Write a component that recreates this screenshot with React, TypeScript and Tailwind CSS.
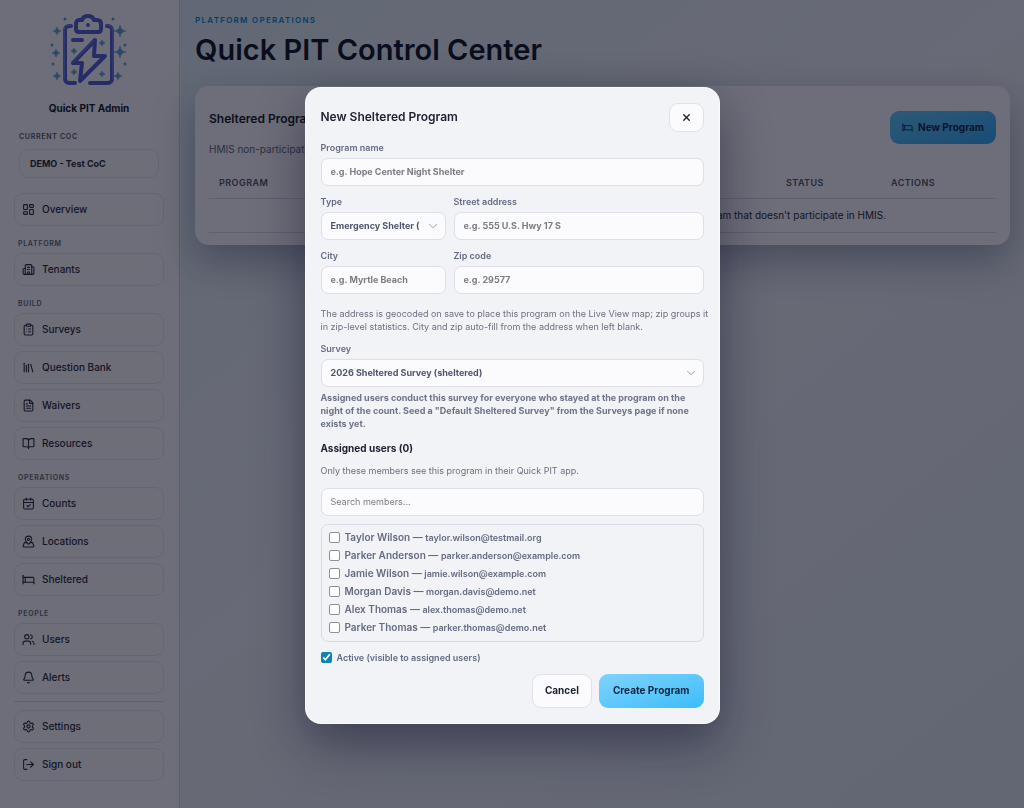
import { useState } from "react";
import type { ReactNode } from "react";
import {
  Bed,
  Bell,
  BookOpen,
  Building2,
  CalendarCheck,
  ChevronDown,
  ClipboardList,
  FileText,
  LayoutDashboard,
  Library,
  LogOut,
  MapPinned,
  Settings,
  Users,
  X,
} from "lucide-react";
import type { LucideIcon } from "lucide-react";
import { clsx } from "clsx";

interface NavItem {
  label: string;
  icon: LucideIcon;
}

interface NavGroup {
  title?: string;
  items: NavItem[];
}

interface Member {
  name: string;
  email: string;
}

const navGroups: NavGroup[] = [
  { items: [{ label: "Overview", icon: LayoutDashboard }] },
  { title: "Platform", items: [{ label: "Tenants", icon: Building2 }] },
  {
    title: "Build",
    items: [
      { label: "Surveys", icon: ClipboardList },
      { label: "Question Bank", icon: Library },
      { label: "Waivers", icon: FileText },
      { label: "Resources", icon: BookOpen },
    ],
  },
  {
    title: "Operations",
    items: [
      { label: "Counts", icon: CalendarCheck },
      { label: "Locations", icon: MapPinned },
      { label: "Sheltered", icon: Bed },
    ],
  },
  {
    title: "People",
    items: [
      { label: "Users", icon: Users },
      { label: "Alerts", icon: Bell },
    ],
  },
];

const members: Member[] = [
  { name: "Taylor Wilson", email: "taylor.wilson@testmail.org" },
  { name: "Parker Anderson", email: "parker.anderson@example.com" },
  { name: "Jamie Wilson", email: "jamie.wilson@example.com" },
  { name: "Morgan Davis", email: "morgan.davis@demo.net" },
  { name: "Alex Thomas", email: "alex.thomas@demo.net" },
  { name: "Parker Thomas", email: "parker.thomas@demo.net" },
];

// [x, y, radius] of the sparkles around the clipboard
const sparkles = [
  [7, 17, 4],
  [6, 39, 4],
  [7, 62, 4],
  [70, 17, 6],
  [70, 38, 6],
  [68, 62, 4],
  [24, 37, 3],
  [52, 29, 3],
  [24, 58, 3],
  [52, 60, 3],
];

const dots = [
  [15, 5],
  [63, 5],
  [2, 31],
  [75, 31],
  [3, 50],
  [75, 50],
];

function Logo() {
  return (
    <svg width="78" height="74" viewBox="0 0 78 74" fill="none" aria-hidden="true">
      <g stroke="#4a5ace" strokeWidth="4" strokeLinecap="round" strokeLinejoin="round">
        <path d="M21 12h-2a4 4 0 0 0-4 4v49a4 4 0 0 0 4 4h6" />
        <path d="M57 12h1a4 4 0 0 1 4 4v49a4 4 0 0 1-4 4H40" />
        <path d="M29 6h3c1-3 3-4 6-4s5 1 6 4h3c3 0 4 2 4 4v5c0 2-1 3-3 3H29c-2 0-3-1-3-3v-5c0-2 1-4 3-4Z" />
        <path d="M23 26h9" />
        <path d="M45 26 23 49h9l-2 18 25-25H44Z" />
      </g>
      <g stroke="#8f9ff0" strokeWidth="1" strokeLinecap="round" strokeLinejoin="round" opacity="0.7">
        <path d="M21 11h-2a5 5 0 0 0-5 5v49" />
        <path d="M57 11h1a5 5 0 0 1 5 5v49" />
        <path d="M44 26 23 48" />
      </g>
      <circle cx="38" cy="11" r="2" fill="#4a5ace" />
      <g fill="#5a9ccc" stroke="#5a9ccc" strokeWidth="0.6">
        {sparkles.map(([x, y, r]) => (
          <path
            key={`${x}-${y}`}
            d={`M${x} ${y - r}Q${x + 0.6} ${y - 0.6} ${x + r} ${y}Q${x + 0.6} ${y + 0.6} ${x} ${y + r}Q${x - 0.6} ${y + 0.6} ${x - r} ${y}Q${x - 0.6} ${y - 0.6} ${x} ${y - r}Z`}
          />
        ))}
        {dots.map(([x, y]) => (
          <circle key={`${x}-${y}`} cx={x} cy={y} r="1.2" />
        ))}
      </g>
    </svg>
  );
}

function NavLink({ label, icon: Icon }: NavItem) {
  return (
    <a
      href="#"
      className="flex h-[33px] items-center gap-[7px] rounded-[9px] border border-[#dde3ec] bg-white/10 px-[7px] text-[10px] font-medium text-[#1e2433]"
    >
      <Icon className="h-[13px] w-[13px]" strokeWidth={2} />
      {label}
    </a>
  );
}

function Sidebar() {
  return (
    <aside className="flex w-[180px] shrink-0 flex-col border-r border-[#c3d3e0] bg-[#f6f5f9] pt-3.5 pr-[15px] pl-3.5">
      <div className="flex flex-col items-center">
        <Logo />
        <p className="mt-3 text-[10px] leading-4 font-bold text-[#0f1424]">Quick PIT Admin</p>
      </div>

      <div className="mt-4 mb-[15px] px-[5px]">
        <p className="text-[7px] leading-2.5 font-semibold tracking-widest text-[#4b5163] uppercase">
          Current CoC
        </p>
        <button
          type="button"
          className="mt-[7px] block h-[29px] w-full rounded-[9px] border border-[#dde3ec] bg-white/10 px-2.5 text-left text-[9px] font-bold text-[#1e2433]"
        >
          DEMO - Test CoC
        </button>
      </div>

      <nav>
        {navGroups.map((group, index) => (
          <div key={index}>
            {group.title && (
              <h2 className="h-[27px] px-1 pt-[13px] text-[7px] leading-2.5 font-semibold tracking-widest text-[#5b6172] uppercase">
                {group.title}
              </h2>
            )}
            <div className="flex flex-col gap-[5px]">
              {group.items.map((item) => (
                <NavLink key={item.label} {...item} />
              ))}
            </div>
          </div>
        ))}
      </nav>

      <div className="mt-[7px] flex flex-col gap-[5px] border-t border-[#d0d6e0] pt-2">
        <NavLink label="Settings" icon={Settings} />
        <NavLink label="Sign out" icon={LogOut} />
      </div>
    </aside>
  );
}

function ProgramsCard() {
  return (
    <section className="mt-[18px] rounded-[14px] bg-[#f6f5f9] px-3.5 pt-[25px] pb-3 shadow-[0_16px_40px_rgba(15,23,60,0.35)]">
      <div className="flex items-start justify-between">
        <div>
          <h2 className="text-[12px] leading-4 font-semibold text-[#0f1424]">Sheltered Programs</h2>
          <p className="mt-3.5 text-[10px] leading-4 text-[#5b6172]">
            HMIS non-participating programs counted on the night of the PIT.
          </p>
        </div>
        <button
          type="button"
          className="flex h-[33px] items-center gap-[5px] rounded-[9px] bg-linear-to-br from-[#5cc4f5] to-[#2aa5ee] px-3 text-[10px] font-bold text-[#0b2440]"
        >
          <Bed className="h-[11px] w-[11px]" strokeWidth={2} />
          New Program
        </button>
      </div>

      <table className="mt-2.5 w-full table-fixed border-collapse text-[10px]">
        <thead>
          <tr className="h-[31px] border-b border-[#cfd3dd] text-left text-[9px] tracking-wider text-[#4b5163] uppercase">
            <th className="w-[22%] px-2.5 font-semibold">Program</th>
            <th className="w-[15%] px-2.5 font-semibold">Type</th>
            <th className="px-2.5 font-semibold">Survey</th>
            <th className="w-[105px] px-2.5 font-semibold">Status</th>
            <th className="w-[115px] px-2.5 font-semibold">Actions</th>
          </tr>
        </thead>
        <tbody>
          <tr className="h-[34px] border-b border-[#cfd3dd] text-center text-[#1e2433]">
            <td colSpan={5}>
              No sheltered programs yet. Create one for each emergency shelter or housing program that
              doesn't participate in HMIS.
            </td>
          </tr>
        </tbody>
      </table>
    </section>
  );
}

const labelClass = "block text-[9px] leading-3 font-semibold text-[#646b82]";
const fieldClass =
  "block h-7 w-full rounded-[7px] border border-[#dcdfe7] bg-[#fbfbfd] px-[9px] text-[9px] text-[#4f566c] placeholder:text-[#7b7d84]";

interface FieldProps {
  id: string;
  label: string;
  children: ReactNode;
}

function Field({ id, label, children }: FieldProps) {
  return (
    <div className="min-w-0">
      <label htmlFor={id} className={clsx(labelClass, "mb-1")}>
        {label}
      </label>
      {children}
    </div>
  );
}

function SelectBox({ id, options }: { id: string; options: string[] }) {
  return (
    <div className="relative">
      <select id={id} className={clsx(fieldClass, "appearance-none pr-[26px] font-bold")}>
        {options.map((option) => (
          <option key={option}>{option}</option>
        ))}
      </select>
      <ChevronDown
        className="pointer-events-none absolute top-[7px] right-1.5 h-3.5 w-3.5 text-[#8b90a0]"
        strokeWidth={1.5}
      />
    </div>
  );
}

function CheckBox({ id, checked, onChange }: { id: string; checked: boolean; onChange: () => void }) {
  return (
    <input
      id={id}
      type="checkbox"
      checked={checked}
      onChange={onChange}
      className={clsx(
        "h-[11px] w-[11px] shrink-0 accent-[#0b84b5]",
        !checked && "appearance-none rounded-[2px] border border-[#8f9096] bg-white",
      )}
    />
  );
}

function NewProgramDialog() {
  const [active, setActive] = useState(true);
  const [assigned, setAssigned] = useState<Set<string>>(new Set());

  const toggleMember = (email: string) => {
    setAssigned((prev) => {
      const next = new Set(prev);

      if (next.has(email)) {
        next.delete(email);
      } else {
        next.add(email);
      }
      return next;
    });
  };

  return (
    <div
      role="dialog"
      aria-modal="true"
      aria-labelledby="dialog-title"
      className="w-full max-w-[415px] rounded-[16px] border border-white/60 bg-[#f2f3f6] p-[15px] shadow-[0_20px_50px_rgba(10,12,40,0.45)]"
    >
      <div className="flex items-center justify-between">
        <h2 id="dialog-title" className="text-[12px] leading-4 font-semibold text-[#1d2030]">
          New Sheltered Program
        </h2>
        <button
          type="button"
          aria-label="Close"
          className="flex h-[29px] w-[35px] items-center justify-center rounded-[9px] border border-[#e0e2e9] bg-[#fbfbfd] text-[#1d2030]"
        >
          <X className="h-[11px] w-[11px]" strokeWidth={3} />
        </button>
      </div>

      <form className="mt-2.5">
        <div className="flex flex-col gap-2.5">
          <Field id="name" label="Program name">
            <input
              id="name"
              className={clsx(fieldClass, "font-bold")}
              placeholder="e.g. Hope Center Night Shelter"
            />
          </Field>
          <div className="grid grid-cols-[1fr_2fr] gap-x-2 gap-y-2.5">
            <Field id="type" label="Type">
              <SelectBox id="type" options={["Emergency Shelter (ES)", "Transitional Housing (TH)"]} />
            </Field>
            <Field id="street" label="Street address">
              <input
                id="street"
                className={clsx(fieldClass, "font-bold")}
                placeholder="e.g. 555 U.S. Hwy 17 S"
              />
            </Field>
            <Field id="city" label="City">
              <input
                id="city"
                className={clsx(fieldClass, "font-bold")}
                placeholder="e.g. Myrtle Beach"
              />
            </Field>
            <Field id="zip" label="Zip code">
              <input
                id="zip"
                className={clsx(fieldClass, "font-bold")}
                placeholder="e.g. 29577"
              />
            </Field>
          </div>
        </div>

        <p className="mt-[13px] -mr-2.5 mb-2.5 text-[9px] leading-[13px] text-[#6b7080]">
          The address is geocoded on save to place this program on the Live View map; zip groups it in
          zip-level statistics. City and zip auto-fill from the address when left blank.
        </p>

        <Field id="survey" label="Survey">
          <SelectBox id="survey" options={["2026 Sheltered Survey (sheltered)"]} />
        </Field>
        <p className="mt-1 text-[9px] leading-[13px] font-bold text-[#6d7389]">
          Assigned users conduct this survey for everyone who stayed at the program on the night of the
          count. Seed a "Default Sheltered Survey" from the Surveys page if none exists yet.
        </p>

        <h3 className="mt-2.5 text-[10px] leading-4 font-bold text-[#1d2030]">
          Assigned users ({assigned.size})
        </h3>
        <p className="mt-2 text-[9px] leading-[13px] text-[#6b7080]">
          Only these members see this program in their Quick PIT app.
        </p>
        <input
          type="search"
          aria-label="Search members"
          className={clsx(fieldClass, "mt-[11px]")}
          placeholder="Search members..."
        />

        <ul className="mt-2 rounded-[7px] border border-[#d9dce4] px-[7px] py-1">
          {members.map((member) => (
            <li key={member.email} className="flex h-[18px] items-center gap-[5px]">
              <CheckBox
                id={member.email}
                checked={assigned.has(member.email)}
                onChange={() => toggleMember(member.email)}
              />
              <label htmlFor={member.email} className="text-[10px] font-semibold text-[#646b82]">
                {member.name} — <span className="text-[9px]">{member.email}</span>
              </label>
            </li>
          ))}
        </ul>

        <div className="mt-2.5 flex items-center gap-[5px]">
          <CheckBox id="active" checked={active} onChange={() => setActive(!active)} />
          <label htmlFor="active" className={labelClass}>
            Active (visible to assigned users)
          </label>
        </div>

        <div className="mt-2.5 flex justify-end gap-[7px]">
          <button
            type="button"
            className="h-[34px] rounded-[9px] border border-[#e0e2e9] bg-[#fbfbfd] px-3 text-[10px] font-bold text-[#1d2030]"
          >
            Cancel
          </button>
          <button
            type="button"
            className="h-[34px] rounded-[9px] bg-linear-to-br from-[#7dd3fc] to-[#38bdf8] px-3.5 text-[10px] font-bold text-[#0b2440]"
          >
            Create Program
          </button>
        </div>
      </form>
    </div>
  );
}

export default function App() {
  return (
    <div className="flex min-h-screen bg-linear-to-br from-[#d8e7f1] via-[#e9ecf2] to-[#dce4ed] font-['Inter','Liberation_Sans',sans-serif]">
      <Sidebar />
      <main className="min-w-0 flex-1 pt-3.5 pr-3.5 pl-[15px]">
        <p className="text-[8px] leading-3 font-semibold tracking-[0.16em] text-[#0284c7] uppercase">
          Platform Operations
        </p>
        <h1 className="mt-1.5 text-[29px] leading-9 font-semibold text-[#0b1020]">
          Quick PIT Control Center
        </h1>
        <ProgramsCard />
      </main>

      <div className="fixed inset-0 flex items-center justify-center bg-[#0a0c1c]/58 px-4 pt-[18px] pb-4">
        <NewProgramDialog />
      </div>
    </div>
  );
}
